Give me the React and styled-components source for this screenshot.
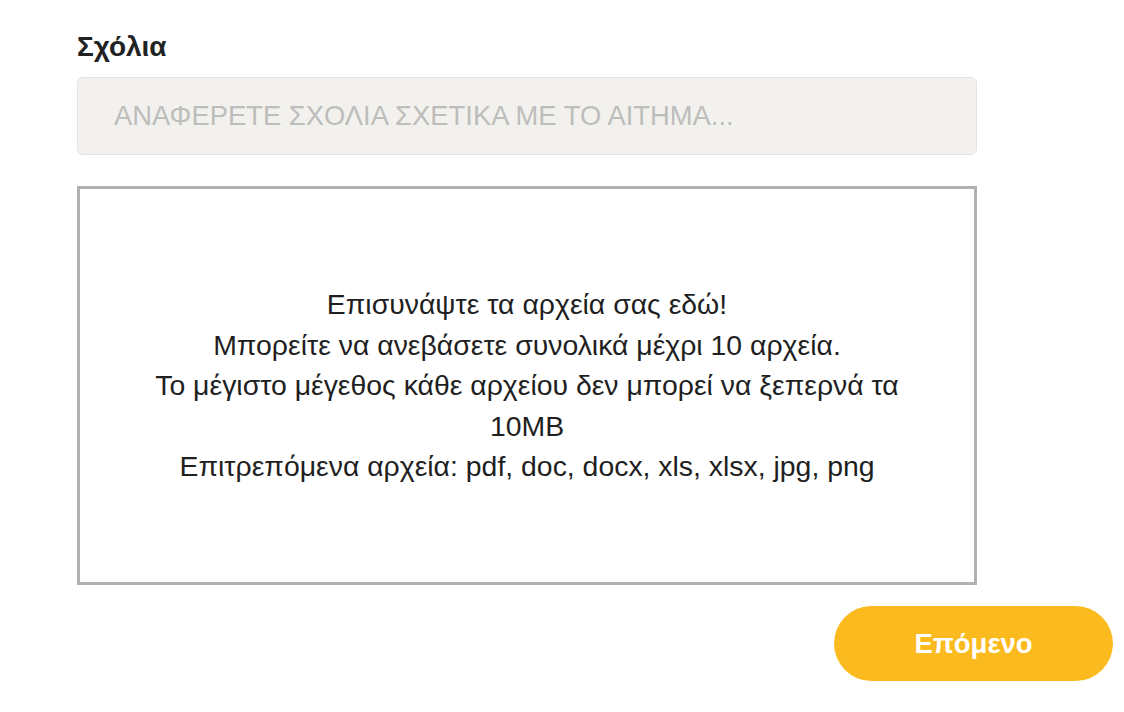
import React from 'react';
import styled, { createGlobalStyle } from 'styled-components';

const GlobalStyle = createGlobalStyle`
    body {
        margin: 0;
        background: #ffffff;
        font-family: "Liberation Sans", Arial, sans-serif;
    }
`;

const Page = styled.div`
    width: 1124px;
    height: 712px;
    box-sizing: border-box;
    padding: 31px 11px 0 77px;
    display: flex;
    flex-direction: column;
    overflow: hidden;
`;

const Form = styled.div`
    width: 900px;
    display: flex;
    flex-direction: column;
`;

const Label = styled.label`
    font-size: 28px;
    line-height: 32px;
    font-weight: 700;
    color: #222222;
    margin-bottom: 14px;
`;

const CommentInput = styled.input`
    width: 100%;
    height: 78px;
    box-sizing: border-box;
    border: 1px solid #e5e3df;
    border-radius: 6px;
    background: #f2f1ee;
    padding: 0 36px;
    font-family: "Liberation Sans", Arial, sans-serif;
    font-size: 27.4px;
    color: #333333;
    outline: none;

    &::placeholder {
        color: #bdbdbb;
    }
`;

const DropZone = styled.div`
    margin-top: 31px;
    height: 399px;
    box-sizing: border-box;
    border: 3px solid #b1b1b1;
    display: flex;
    align-items: center;
    justify-content: center;
    padding: 0 60px;
`;

const DropText = styled.p`
    margin: 0;
    max-width: 770px;
    text-align: center;
    font-size: 28.4px;
    line-height: 40.5px;
    color: #1f1f1f;
`;

const ButtonRow = styled.div`
    margin-top: 21px;
    display: flex;
    justify-content: flex-end;
`;

const NextButton = styled.button`
    width: 279px;
    height: 75px;
    border: none;
    border-radius: 38px;
    background: #fbba1d;
    color: #ffffff;
    font-family: "Liberation Sans", Arial, sans-serif;
    font-size: 27.5px;
    font-weight: 700;
    cursor: pointer;
`;

const App = () => {
    return (
        <>
            <GlobalStyle />
            <Page>
                <Form>
                    <Label>Σχόλια</Label>
                    <CommentInput placeholder="ΑΝΑΦΕΡΕΤΕ ΣΧΟΛΙΑ ΣΧΕΤΙΚΑ ΜΕ ΤΟ ΑΙΤΗΜΑ..." />
                    <DropZone>
                        <DropText>
                            Επισυνάψτε τα αρχεία σας εδώ!<br />
                            Μπορείτε να ανεβάσετε συνολικά μέχρι 10 αρχεία.<br />
                            Το μέγιστο μέγεθος κάθε αρχείου δεν μπορεί να ξεπερνά τα 10MB<br />
                            Επιτρεπόμενα αρχεία: pdf, doc, docx, xls, xlsx, jpg, png
                        </DropText>
                    </DropZone>
                </Form>
                <ButtonRow>
                    <NextButton>Επόμενο</NextButton>
                </ButtonRow>
            </Page>
        </>
    );
};

export default App;
